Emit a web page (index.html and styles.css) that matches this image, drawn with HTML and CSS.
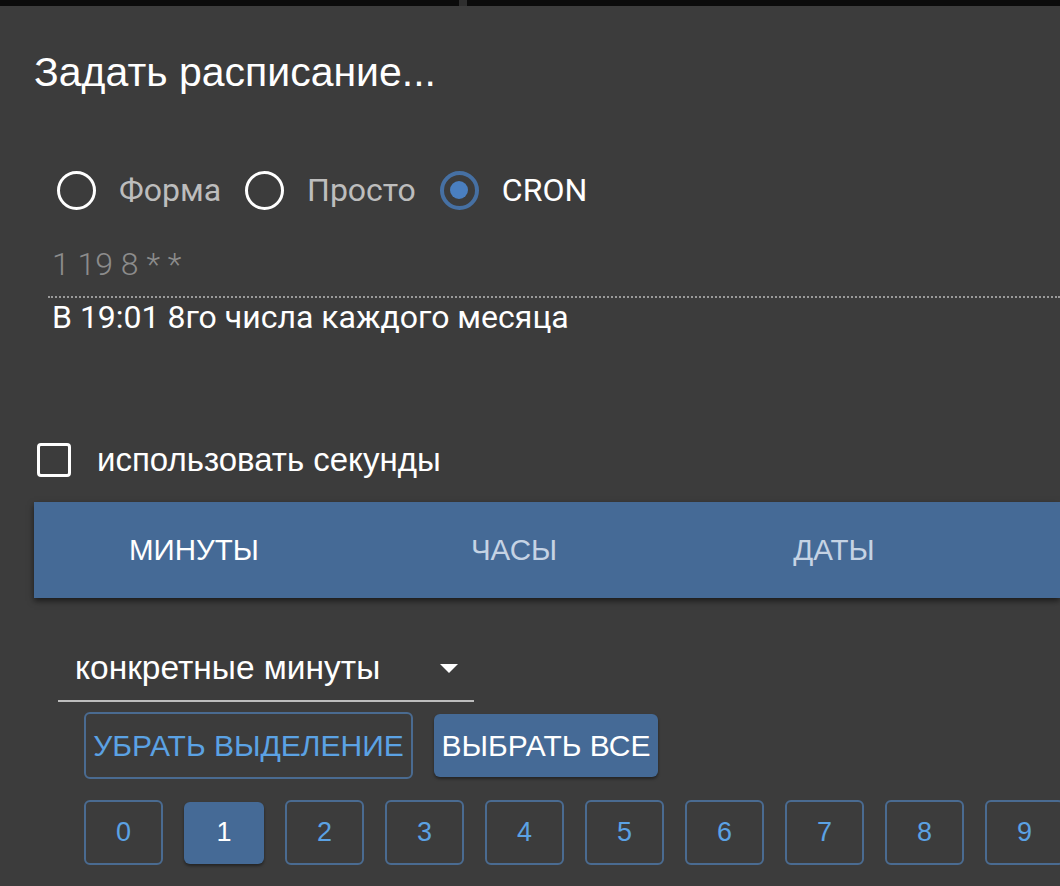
FILE: index.html
```html
<!DOCTYPE html>
<html lang="ru">
<head>
    <meta charset="utf-8">
    <link rel="stylesheet" href="styles.css">
    <title>Задать расписание</title>
</head>
<body>
    <div class="topbar"><span class="topbar-split"></span></div>
    <div class="dialog">
        <h1 class="title">Задать расписание...</h1>

        <div class="mode-row">
            <label class="radio"><span class="radio-circle"></span><span class="radio-label">Форма</span></label>
            <label class="radio"><span class="radio-circle"></span><span class="radio-label">Просто</span></label>
            <label class="radio checked"><span class="radio-circle"><span class="radio-dot"></span></span><span class="radio-label">CRON</span></label>
        </div>

        <div class="cron-field">
            <div class="cron-value">1 19 8 * *</div>
            <div class="cron-desc">В 19:01 8го числа каждого месяца</div>
        </div>

        <label class="seconds">
            <span class="checkbox"></span>
            <span class="seconds-label">использовать секунды</span>
        </label>

        <div class="tabs">
            <div class="tab active">МИНУТЫ</div>
            <div class="tab">ЧАСЫ</div>
            <div class="tab">ДАТЫ</div>
        </div>

        <div class="tab-body">
            <div class="select">
                <span class="select-text">конкретные минуты</span>
                <span class="select-arrow"></span>
            </div>

            <div class="actions">
                <button class="btn btn-outline">УБРАТЬ ВЫДЕЛЕНИЕ</button>
                <button class="btn btn-filled">ВЫБРАТЬ ВСЕ</button>
            </div>

            <div class="numbers">
                <button class="num">0</button>
                <button class="num selected">1</button>
                <button class="num">2</button>
                <button class="num">3</button>
                <button class="num">4</button>
                <button class="num">5</button>
                <button class="num">6</button>
                <button class="num">7</button>
                <button class="num">8</button>
                <button class="num">9</button>
            </div>
        </div>
    </div>
</body>
</html>
```

FILE: styles.css
```css
body {
    margin: 0;
    background-color: #3c3c3c;
    color: #fff;
    font-family: "Liberation Sans", Arial, sans-serif;
    overflow: hidden;
    width: 1060px;
    height: 886px;
}

.topbar {
    height: 6px;
    background-color: #0b0b0b;
    position: relative;
}

.topbar-split {
    position: absolute;
    left: 459px;
    top: 0;
    width: 8px;
    height: 6px;
    background-color: #2e2e2e;
}

.dialog {
    padding-left: 34px;
}

.title {
    margin: 44px 0 0;
    font-size: 41px;
    line-height: 44px;
    font-weight: normal;
}

/* radio group */
.mode-row {
    display: flex;
    align-items: center;
    gap: 24px;
    margin-top: 76px;
    padding-left: 23px;
    height: 40px;
    font-family: Roboto, "Liberation Sans", sans-serif;
    font-size: 32px;
}

.radio {
    display: flex;
    align-items: center;
    gap: 23px;
}

.radio-circle {
    width: 33px;
    height: 33px;
    border: 3px solid #fff;
    border-radius: 50%;
    display: flex;
    align-items: center;
    justify-content: center;
}

.radio-label {
    color: #bdbdbd;
}

.radio.checked .radio-circle {
    border: 4px solid #4670a3;
    width: 31px;
    height: 31px;
}

.radio-dot {
    width: 18px;
    height: 18px;
    border-radius: 50%;
    background-color: #4a7fc0;
}

.radio.checked .radio-label {
    color: #fff;
}

/* cron input */
.cron-field {
    margin-top: 36px;
    margin-left: 14px;
    font-family: Roboto, "Liberation Sans", sans-serif;
}

.cron-value {
    font-size: 32px;
    font-weight: 300;
    line-height: 36px;
    color: #8c8c8c;
    padding-left: 4px;
    padding-bottom: 14px;
    border-bottom: 2px dotted #9a9a9a;
}

.cron-desc {
    margin-top: 2px;
    padding-left: 4px;
    font-size: 32px;
    line-height: 34px;
}

/* seconds checkbox */
.seconds {
    display: flex;
    align-items: center;
    gap: 26px;
    margin-top: 108px;
    margin-left: 3px;
    height: 36px;
    font-size: 33px;
}

.checkbox {
    width: 28px;
    height: 28px;
    border: 3px solid #fff;
    border-radius: 4px;
}

/* tabs */
.tabs {
    display: flex;
    margin-top: 24px;
    height: 96px;
    background-color: #456a96;
    box-shadow: 0 3px 6px rgba(0, 0, 0, 0.55);
}

.tab {
    width: 320px;
    display: flex;
    align-items: center;
    justify-content: center;
    font-size: 29.5px;
    color: #c5d3e4;
}

.tab.active {
    color: #fff;
}

/* tab content */
.tab-body {
    padding-left: 24px;
}

.select {
    width: 416px;
    margin-top: 52px;
    display: flex;
    align-items: center;
    justify-content: space-between;
    padding-bottom: 14px;
    border-bottom: 2px solid #bdbdbd;
    box-sizing: border-box;
}

.select-text {
    padding-left: 17px;
    font-size: 33.5px;
    line-height: 36px;
}

.select-arrow {
    width: 0;
    height: 0;
    margin-right: 16px;
    border-left: 9px solid transparent;
    border-right: 9px solid transparent;
    border-top: 9px solid #fff;
}

.actions {
    display: flex;
    align-items: center;
    gap: 21px;
    margin-top: 10px;
    margin-left: 26px;
}

.btn {
    font-family: "Liberation Sans", Arial, sans-serif;
    font-size: 30px;
    height: 67px;
    border-radius: 6px;
    padding: 0;
    cursor: pointer;
}

.btn-outline {
    width: 329px;
    background: transparent;
    border: 2px solid #4a6b91;
    color: #5ba2e4;
}

.btn-filled {
    width: 224px;
    height: 63px;
    background-color: #456a96;
    border: none;
    color: #fff;
    box-shadow: 0 2px 3px rgba(0, 0, 0, 0.4);
}

.numbers {
    display: flex;
    align-items: center;
    gap: 21px;
    margin-top: 21px;
    margin-left: 26px;
}

.num {
    flex: none;
    width: 79px;
    height: 65px;
    border-radius: 6px;
    border: 2px solid #4a6b91;
    background: transparent;
    color: #5ba2e4;
    font-family: "Liberation Sans", Arial, sans-serif;
    font-size: 27px;
    cursor: pointer;
}

.num.selected {
    width: 80px;
    height: 62px;
    border: none;
    background-color: #456a96;
    color: #fff;
    box-shadow: 0 2px 3px rgba(0, 0, 0, 0.4);
}
```
